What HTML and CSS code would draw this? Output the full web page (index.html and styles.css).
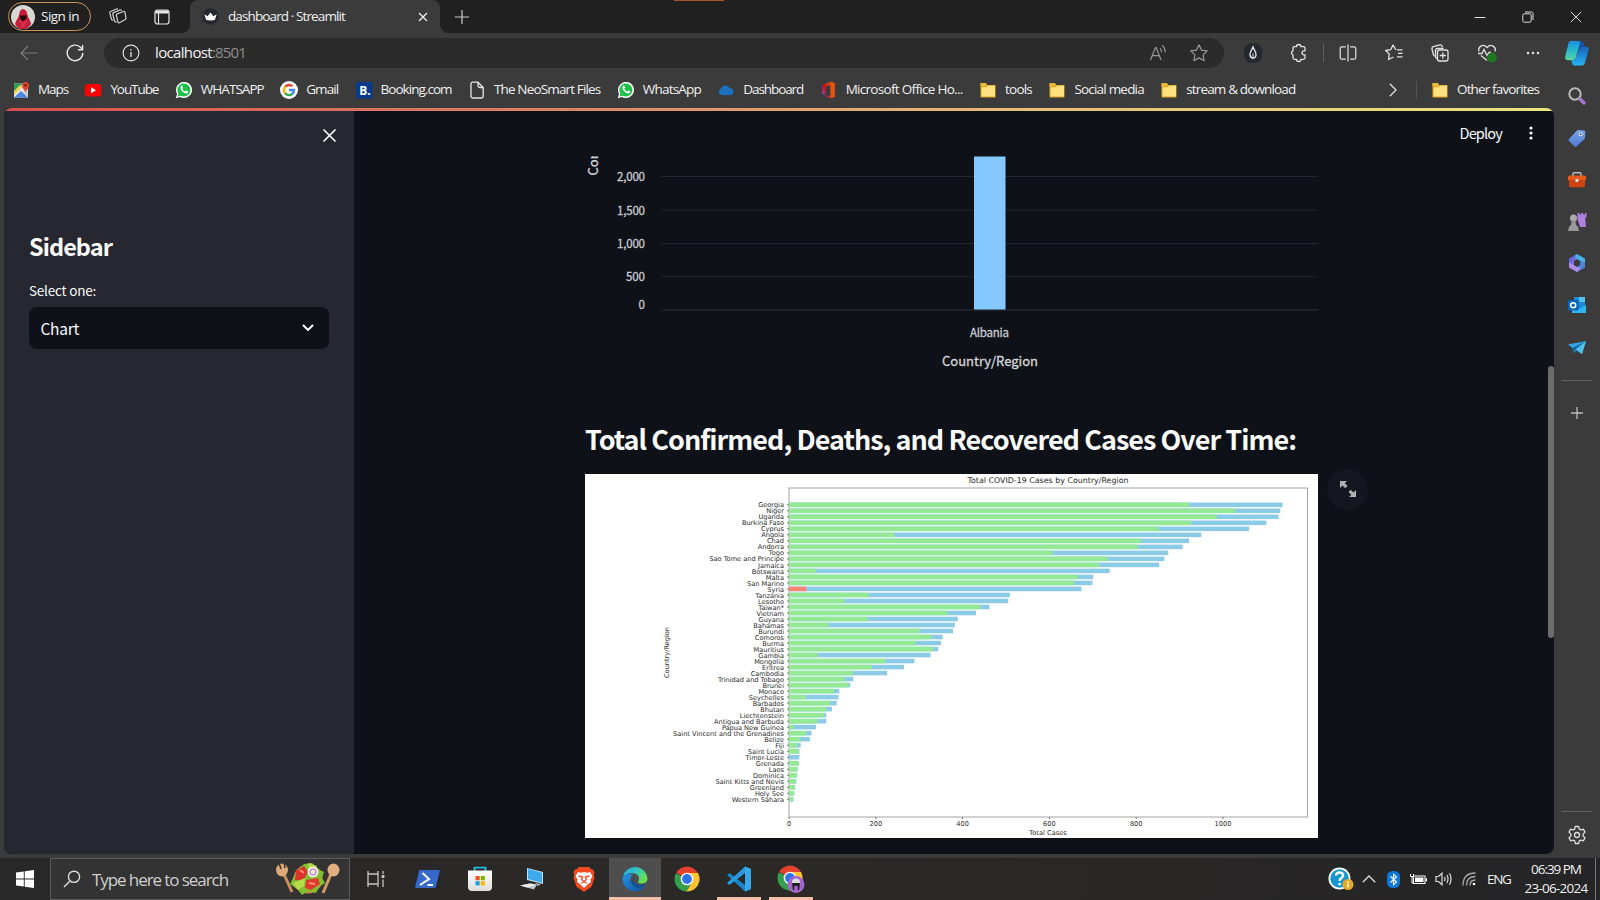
FILE: index.html
```html
<!DOCTYPE html>
<html lang="en">
<head>
<meta charset="utf-8">
<title>dashboard · Streamlit</title>
<link rel="stylesheet" href="styles.css">
</head>
<body>
<svg class="defs" width="0" height="0">
  <defs>
    <linearGradient id="gCopA" x1="0" y1="0" x2="0" y2="1"><stop offset="0" stop-color="#1b8fe0"/><stop offset=".5" stop-color="#25b9c8"/><stop offset="1" stop-color="#5fd5a0"/></linearGradient>
    <linearGradient id="gCopB" x1="0" y1="0" x2="0" y2="1"><stop offset="0" stop-color="#1660c0"/><stop offset="1" stop-color="#25b5f2"/></linearGradient>
    <linearGradient id="gEdge" x1="0" y1="0" x2="1" y2=".5"><stop offset="0" stop-color="#2aa9e8"/><stop offset=".55" stop-color="#2fc6c4"/><stop offset="1" stop-color="#68e04c"/></linearGradient>
    <linearGradient id="gEdgeB" x1="0" y1="0" x2="1" y2="1"><stop offset="0" stop-color="#2496e4"/><stop offset="1" stop-color="#1050a0"/></linearGradient>
    <linearGradient id="gTag" x1="0" y1="0" x2="0" y2="1"><stop offset="0" stop-color="#7aa5ee"/><stop offset="1" stop-color="#5078cf"/></linearGradient>
    <linearGradient id="gOff" x1="0" y1="1" x2="1" y2="0"><stop offset="0" stop-color="#b04be0"/><stop offset=".45" stop-color="#c8101e"/><stop offset="1" stop-color="#ee6a10"/></linearGradient>
    <linearGradient id="gM1" x1="0" y1="0" x2="1" y2="1"><stop offset="0" stop-color="#4a5fd8"/><stop offset="1" stop-color="#a678e8"/></linearGradient>
    <linearGradient id="gStore" x1="0" y1="0" x2="0" y2="1"><stop offset="0" stop-color="#fff"/><stop offset="1" stop-color="#dcdcdc"/></linearGradient>
  </defs>
  <symbol id="folder" viewBox="0 0 18 18"><path d="M1.500 2h5.200l1.600 2h8.200v12.500h-15z" fill="#d9a520"/><path d="M2.500 6.200h5L9 4.800h7v10.700H2.500z" fill="#ffdf7e"/><path d="M1.500 2h5.200l1.300 1.700L6.600 5.400H1.500z" fill="#edb83a"/></symbol>
  <symbol id="whatsapp" viewBox="0 0 18 18"><path d="M.8 17.300l1.300-4.300A8 8 0 1 1 5 15.900z" fill="#fff"/><path d="M2.600 15.500l.8-3A6.500 6.500 0 1 1 5.800 14.700z" fill="#1fbf4c"/><path d="M5.700 5.300c.5-1 1.400-.9 1.700-.2l.7 1.500-.8 1.200c.6 1.300 1.600 2.200 2.900 2.700l1-1.100 1.800.9c.4.300 0 1.500-.7 1.900-2.500 1.300-8-3.300-6.600-6.900z" fill="#fff"/></symbol>
  <symbol id="chrome" viewBox="0 0 26 26"><path d="M13 13L2.200 6.800A12.500 12.500 0 0 1 23.800 6.800z" fill="#e8402f"/><path d="M13 13L1.900 7.200A12.500 12.500 0 0 0 12.500 25.500L18.500 15z" fill="#34a04e"/><path d="M13 7h11a12.500 12.500 0 0 1-11.500 18.500L18.500 15z" fill="#fcc42e"/><circle cx="13" cy="13" r="6.300" fill="#fff"/><circle cx="13" cy="13" r="4.900" fill="#2f73e8"/></symbol>
</svg>

<div class="browser">
  <header class="titlebar">
    <span class="accent"></span>
    <div class="signin">
      <svg width="24" height="24" viewBox="0 0 24 24"><circle cx="12" cy="12" r="12" fill="#d8d8d2"/><path d="M4 19c1-4 3-5 4-9 .5-4 2-6 4-6s4 2 4.500 6c.5 3 3 5 3.500 9-2 4-5 5-8 5s-6-1-8-5z" fill="#c41c3a"/><path d="M8.500 10.500h7.500l-1.500 4-2.400 1.500-2.300-1.500z" fill="#1b0b10"/><path d="M8 16l3 2v4M16 16l-3 2v4" stroke="#e24a5e" fill="none"/></svg>
      <span data-w="38">Sign in</span>
    </div>
    <svg class="t-work" width="20" height="20" viewBox="0 0 20 20" fill="none" stroke="#d0d0d0" stroke-width="1.200" stroke-linejoin="round"><path d="M9 7l6.500-2.500q1.200-.4 1.500.8l1 5.700q.2 1-.7 1.500l-6 3.300q-1 .4-1.300-.6L8.400 8.300q0-.9.600-1.300z"/><path d="M5.500 5.600L12 3q1-.3 1.600.6M5.500 5.600q-.9.400-.7 1.400l1.700 7 2 1.500"/><path d="M2.500 4.500L8.500 2q.9-.3 1.500.4M2.500 4.500q-.9.400-.7 1.400l1.700 6.500 1.300 1"/></svg>
    <svg class="t-panel" width="18" height="18" viewBox="0 0 18 18" fill="none" stroke="#e6e6e6" stroke-width="1.200"><rect x="2" y="2" width="14" height="14" rx="2.500"/><path d="M2.500 4h13" stroke-width="3"/><path d="M5.500 5v11"/></svg>
    <div class="tab">
      <svg width="17" height="17" viewBox="0 0 17 17"><circle cx="8.500" cy="8.500" r="8.300" fill="#262730"/><path d="M2.300 6.200l3.300 2 2.900-3.700 2.900 3.700 3.300-2-1.900 5.800q-4.300.8-8.600 0z" fill="#fff"/></svg>
      <span class="tab-title" data-w="117">dashboard · Streamlit</span>
      <svg class="tab-x" width="10" height="10" viewBox="0 0 10 10" stroke="#eee" stroke-width="1.300"><path d="M1 1l8 8M9 1l-8 8"/></svg>
    </div>
    <svg class="t-plus" width="16" height="16" viewBox="0 0 16 16" stroke="#ccc" stroke-width="1.200"><path d="M8 1v14M1 8h14"/></svg>
    <div class="winbtns">
      <svg width="12" height="12" viewBox="0 0 12 12" stroke="#ddd"><path d="M.5 6.500h11"/></svg>
      <svg width="12" height="12" viewBox="0 0 12 12" fill="none" stroke="#ddd"><rect x=".8" y="2.800" width="8.400" height="8.400" rx="1.500"/><path d="M3 1h6.500q1.500 0 1.500 1.500V9"/></svg>
      <svg width="12" height="12" viewBox="0 0 12 12" stroke="#ddd"><path d="M.8.8l10.400 10.400M11.200.8L.8 11.200"/></svg>
    </div>
  </header>

  <div class="chrome-top">
    <div class="toolbar">
      <svg class="back" width="18" height="16" viewBox="0 0 18 16" fill="none" stroke="#7d7d7d" stroke-width="1.200"><path d="M17.500 8H1M8 1L1 8l7 7"/></svg>
      <svg class="reload" width="18" height="18" viewBox="0 0 18 18" fill="none" stroke="#e6e6e6" stroke-width="1.400"><path d="M16.800 9A7.800 7.800 0 1 1 14.700 3.600L16.500 5.500M16.600 1v4.700h-4.700"/></svg>
      <div class="address">
        <svg class="info" width="18" height="18" viewBox="0 0 18 18" fill="none" stroke="#ddd" stroke-width="1.200"><circle cx="9" cy="9" r="7.900"/><path d="M9 8v5M9 5v1.500" stroke-width="1.400"/></svg>
        <span class="host" data-w="57">localhost</span><span class="port" data-w="34">:8501</span>
        <svg class="aloud" width="18" height="18" viewBox="0 0 18 18" fill="none" stroke="#999" stroke-width="1.200"><path d="M1.500 16L6.500 3.500h.6l5 12.500M3.300 11.700h7M11 4.100q1.500 1.200 1.300 4M13.300 1.500q3 2.500 2.700 7"/></svg>
        <svg class="fav" width="20" height="20" viewBox="0 0 20 20" fill="none" stroke="#999" stroke-width="1.200" stroke-linejoin="round"><path d="M10 1.800l2.500 5.300 5.700.8-4.100 4 1 5.800-5.100-2.800-5.100 2.800 1-5.800-4.100-4 5.700-.8z"/></svg>
      </div>
      <div class="tools">
        <span><svg width="18" height="20" viewBox="0 0 18 20"><rect width="18" height="20" rx="8" fill="#24282f"/><path d="M9 4c1 3 3 4.500 3 7.500a3 3.500 0 0 1-6 0c0-3 2-4.500 3-7.500z" fill="none" stroke="#eee" stroke-width="1.300"/><path d="M9 10.500v3.500" stroke="#ddd"/></svg></span>
        <span><svg width="20" height="20" viewBox="0 0 20 20" fill="none" stroke="#e2e2e2" stroke-width="1.300" stroke-linejoin="round"><path d="M5.500 3.700h2a2.200 2.200 0 0 1 4.400 0h2.600q1.500 0 1.500 1.500v2.600h-1a2 2 0 0 0 0 4h1v3q0 1.500-1.500 1.500h-2.600a2.200 2.200 0 0 1-4.400 0h-2Q4 16.300 4 14.800v-3a2.100 2.100 0 0 1 0-4V5.200q0-1.500 1.500-1.500z"/></svg></span>
        <i></i>
        <span><svg width="18" height="18" viewBox="0 0 18 18" fill="none" stroke="#e2e2e2" stroke-width="1.200"><path d="M9 .5v17M6.800 2.800H3q-1.800 0-1.800 1.800v8.800q0 1.800 1.800 1.800h3.800M11.200 2.800H15q1.800 0 1.800 1.800v8.800q0 1.800-1.800 1.800h-3.800"/></svg></span>
        <span><svg width="18" height="18" viewBox="0 0 18 18" fill="none" stroke="#e2e2e2" stroke-width="1.300" stroke-linejoin="round"><path d="M12 5.800h5.500M13 9.300h4.500M12 12.800h5.500M11 6L8 1 5.700 5.700l-5 .8 3.600 3.600-.8 5.400L8.500 13"/></svg></span>
        <span><svg width="18" height="18" viewBox="0 0 18 18" fill="none" stroke="#e2e2e2" stroke-width="1.300" stroke-linejoin="round"><path d="M4 12.200q-1.300-.3-1.600-1.500L1 5q-.3-1.800 1.400-2.300l6.500-1.800q1.700-.3 2.300 1.300l.3 1"/><path d="M6.500 14.500H6q-1.500-.3-1.500-2V6.500Q4.500 4.500 6.500 4.500h6"/><rect x="6.500" y="6" width="10.500" height="11" rx="2"/><path d="M11.800 8.500v6M8.800 11.500h6"/></svg></span>
        <span><svg width="20" height="20" viewBox="0 0 20 20" fill="none" stroke="#e2e2e2" stroke-width="1.300"><path d="M2 8.500C.5 4 6 0 10 4.500c4-4.500 9.500-.5 8 4M1 10.500h4l2-4 3 6 2-3h2M4 12.500l6 5"/><circle cx="15" cy="14.500" r="4.800" fill="#1b7a1e" stroke="none"/></svg></span>
        <span><svg width="16" height="4" viewBox="0 0 16 4" fill="#ddd"><circle cx="3" cy="2" r="1.300"/><circle cx="8" cy="2" r="1.300"/><circle cx="13" cy="2" r="1.300"/></svg></span>
      </div>
    </div>
    <nav class="bookmarks">
      <a><svg width="18" height="18" viewBox="0 0 18 18"><path d="M2 2.500h14v14H2z" fill="#e9e9e4"/><path d="M2 2.500h9L2 12z" fill="#2f9b53"/><path d="M2 16.500l7-6.500 7 6.500z" fill="#4b87e8"/><path d="M2 10l6-6 2 2-8 8z" fill="#f4d251"/><path d="M11 11l5 5V8z" fill="#c9ccc8"/><path d="M13.500 12c0-3-3.500-4-3.500-7.500a3.500 3.500 0 0 1 7 0C17 8 13.500 9 13.500 12z" fill="#de4435"/><circle cx="13.500" cy="4.300" r="1.300" fill="#7d1d18"/></svg><span data-w="30">Maps</span></a>
      <a><svg width="18" height="18" viewBox="0 0 18 18"><rect x=".7" y="3" width="16.600" height="12.500" rx="3.500" fill="#f00"/><path d="M7 6.300l5 3-5 3z" fill="#fff"/></svg><span data-w="48">YouTube</span></a>
      <a><svg width="18" height="18"><use href="#whatsapp"/></svg><span data-w="63">WHATSAPP</span></a>
      <a><svg width="18" height="18" viewBox="0 0 18 18" fill="none" stroke-width="2.500"><circle cx="9" cy="9" r="9" fill="#fff"/><path d="M5.200 5.800a5 5 0 0 1 7.200-.7" stroke="#e84335"/><path d="M5.200 5.800a5 5 0 0 0 0 6.400" stroke="#f5b912"/><path d="M5.200 12.200a5 5 0 0 0 7 .8" stroke="#34a350"/><path d="M9 9h4.900q0 2.500-1.700 4" stroke="#4285f4"/></svg><span data-w="32">Gmail</span></a>
      <a><svg width="18" height="18" viewBox="0 0 18 18"><rect x="1" y="1" width="16.500" height="16.500" rx="1.500" fill="#0a3a8c"/><text x="4.300" y="13.800" class="bdot">B.</text></svg><span data-w="71">Booking.com</span></a>
      <a><svg width="18" height="18" viewBox="0 0 18 18" fill="none" stroke="#e8e8e8" stroke-width="1.300" stroke-linejoin="round"><path d="M3 3q0-1.800 1.800-1.800H10l5.200 5.300v8.700q0 1.800-1.800 1.800H4.800Q3 17 3 15.200zM10 1.200v3.500q0 1.800 1.800 1.800h3.400"/></svg><span data-w="106.500">The NeoSmart Files</span></a>
      <a><svg width="18" height="18"><use href="#whatsapp"/></svg><span data-w="58">WhatsApp</span></a>
      <a><svg width="18" height="18" viewBox="0 0 18 18"><path d="M4.500 14a3.300 3.300 0 0 1-.7-6.300 5 5 0 0 1 9-.8 3.600 3.600 0 0 1 .8 7.100z" fill="#1a72bf"/></svg><span data-w="60">Dashboard</span></a>
      <a><svg width="18" height="18" viewBox="0 0 18 18"><path d="M10.500.8L3.800 3.300Q2.300 4 2.300 5.500v7Q2.500 14 3.800 13.300l2-1V5.500l4.700-1.300v10.500L4 14.500l6.500 2.700 4-1.200V2z" fill="url(#gOff)"/><path d="M10.500.8l4.200 1.400v13.700l-4.200 1.300z" fill="#e2560c"/></svg><span data-w="117">Microsoft Office Ho...</span></a>
      <a><svg width="18" height="18"><use href="#folder"/></svg><span data-w="27">tools</span></a>
      <a><svg width="18" height="18"><use href="#folder"/></svg><span data-w="69.500">Social media</span></a>
      <a><svg width="18" height="18"><use href="#folder"/></svg><span data-w="109">stream &amp; download</span></a>
      <svg class="more" width="8" height="14" viewBox="0 0 8 14" fill="none" stroke="#e0e0e0" stroke-width="1.300"><path d="M.8.800L7 7 .8 13.200"/></svg>
      <i></i>
      <a><svg width="18" height="18"><use href="#folder"/></svg><span data-w="82">Other favorites</span></a>
    </nav>
  </div>

  <div class="page">
    <div class="rainbow"></div>
    <aside class="side">
      <svg class="side-x" width="13" height="13" viewBox="0 0 13 13" stroke="#fafafa" stroke-width="1.700" stroke-linecap="round"><path d="M1 1l11 11M12 1L1 12"/></svg>
      <h2><span data-w="83">Sidebar</span></h2>
      <label><span data-w="67">Select one:</span></label>
      <div class="select"><span data-w="38.500">Chart</span><svg width="12" height="8" viewBox="0 0 12 8" fill="none" stroke="#fafafa" stroke-width="2" stroke-linecap="round" stroke-linejoin="round"><path d="M1.500 1.500L6 6l4.500-4.500"/></svg></div>
    </aside>
    <main class="content">
      <div class="appbar"><span data-w="42.500">Deploy</span><svg width="4" height="14" viewBox="0 0 4 14" fill="#fafafa"><circle cx="2" cy="2" r="1.600"/><circle cx="2" cy="7" r="1.600"/><circle cx="2" cy="12" r="1.600"/></svg></div>
      <svg class="bar-chart" width="734" height="218" viewBox="0 0 734 218">
        <g stroke="#23262e" stroke-width="1"><path d="M76.500 20.500H733M76.500 54H733M76.500 87.500H733M76.500 120.800H733"/><path d="M76.500 154H733" stroke="#2b2e36"/></g>
        <rect x="389" y=".5" width="31.500" height="153" fill="#83c9ff"/>
        <g class="axis" text-anchor="end"><text x="60" y="25.200" textLength="28">2,000</text><text x="60" y="58.500" textLength="28">1,500</text><text x="60" y="91.900" textLength="28">1,000</text><text x="60" y="125.300" textLength="19">500</text><text x="60" y="152.500">0</text></g>
        <text class="axis" x="385" y="180.600" textLength="39">Albania</text>
        <text class="axis-title" x="357" y="210.300" textLength="96">Country/Region</text>
        <text class="axis-title" transform="translate(12.500 19.500) rotate(-90)" x="0" y="0">Con</text>
      </svg>
      <h2 class="headline"><span data-w="711">Total Confirmed, Deaths, and Recovered Cases Over Time:</span></h2>
      <div class="figure">
        <svg id="cases" width="733" height="364" viewBox="585 474 733 364"></svg>
        <button class="expand" aria-label="Fullscreen"><svg width="16" height="16" viewBox="0 0 16 16" fill="#aeb0b4"><path d="M0 0h7L4.800 2.300l2.700 2.700-2.200 2.200-2.800-2.700L0 7zM16 16H9l2.300-2.300L8.500 11l2.200-2.200 2.800 2.700L16 9z"/></svg></button>
      </div>
    </main>
    <div class="thumb"></div>
  </div>

  <aside class="rail">
    <svg class="copilot" width="26" height="26" viewBox="0 0 26 27"><path d="M14 1h3q2.500 0 3 2.500l1 4.500h-5l-3-4z" fill="#1e4fae"/><path d="M6.500 1H14q2.800 0 2 3l-4 14q-1 3-4 3H3.500Q0 21 .8 17L4 4Q4.500 1 6.500 1z" fill="url(#gCopA)"/><path d="M18 7h4.500q3.300 0 2.600 3l-3.700 13q-1 3.500-4 3.500H10q-1.500 0-2-2l-.8-3.500q3.500.5 4.800-3l3-8q1-3 3-3z" fill="url(#gCopB)"/></svg>
    <svg width="20" height="20" viewBox="0 0 20 20" fill="none"><circle cx="8" cy="8" r="5.700" stroke="#b9b9b9" stroke-width="2"/><path d="M13 13l4 4" stroke="#a877d6" stroke-width="3.500" stroke-linecap="round"/></svg>
    <svg width="20" height="20" viewBox="0 0 20 20"><path d="M10.500 2l6.500.5q1.300.2 1.300 1.500l-.3 6.500-8.500 8q-1 .8-2 0L2 13q-1-1 0-2z" fill="url(#gTag)"/><circle cx="13.700" cy="6.300" r="2" fill="#dfe9fb"/><circle cx="13.700" cy="6.300" r="1" fill="#456"/></svg>
    <svg width="20" height="20" viewBox="0 0 20 20"><path d="M6 6V4q0-1.200 1.200-1.200h5.600Q14 2.800 14 4v2" fill="none" stroke="#bbb" stroke-width="1.500"/><path d="M1 7q0-1.500 1.500-1.500h15Q19 5.500 19 7v3.500H1z" fill="#e85a1a"/><path d="M2 10.500h16V16q0 1.300-1.300 1.300H3.300Q2 17.300 2 16z" fill="#d1420d"/><circle cx="10" cy="10.500" r="1.700" fill="#ddd"/></svg>
    <svg width="20" height="20" viewBox="0 0 20 20"><path d="M10.500 1h2v1.500h1.700V1h2v1.500H18V1h1.500v4l-1.300 1 .8 9h-6l-2.500-8z" fill="#b07fe0"/><circle cx="6.500" cy="6" r="3.500" fill="#aaa"/><path d="M3.500 9.500h6l-1 1.200q.3 3 2.500 4.300l1 4H1l1-4q2.200-1.300 2.500-4.300z" fill="#999"/></svg>
    <svg width="20" height="20" viewBox="0 0 20 20"><path d="M10 1L2 5.500v8.500l5-2.500V8l5-3z" fill="url(#gM1)"/><path d="M10 1l8 4.500V11l-5-3-3-2-2-3z" fill="#45b4ea"/><path d="M18 9v5.500L10 19l-4-3 7-4 .5-4z" fill="#4c86dd"/><path d="M2 9.500v5L10 19l4-4-4-1-4-2.500z" fill="#b38bea"/><path d="M10 7l3 1.700v3L10 13.500l-3-1.800v-3z" fill="#3b3b3b"/></svg>
    <svg width="20" height="20" viewBox="0 0 20 20"><path d="M7 2h11v13H7z" fill="#1a8ad8"/><path d="M12 2h6v5h-6z" fill="#4fc3f2"/><path d="M5 9.500l7 4.500 7-4v7.500q0 .5-.5.500H5z" fill="#2fb4ee"/><rect x="1" y="5" width="10.500" height="10.500" rx="1.200" fill="#0a64b8"/><circle cx="6.200" cy="10.200" r="2.500" fill="none" stroke="#fff" stroke-width="1.500"/></svg>
    <svg width="20" height="20" viewBox="0 0 20 20"><path d="M1 7.500L19 4l-4 13-5.500-3.500L6.500 16l-1-5z" fill="#31a8e2"/><path d="M5.500 11L19 4 9 12.500 6.500 16z" fill="#13699e"/><path d="M9 12l10-8-4 13z" fill="#4fc0ee"/></svg>
    <i class="rule"></i>
    <svg width="14" height="14" viewBox="0 0 14 14" stroke="#bdbdbd" stroke-width="1.300"><path d="M7 1v12M1 7h12"/></svg>
    <i class="rule low"></i>
    <svg class="gear" width="20" height="20" viewBox="0 0 20 20" fill="none" stroke="#ddd" stroke-width="1.300" stroke-linejoin="round"><path d="M8.300 1.500h3.400l.6 2.600 1.500.8 2.500-.8 1.700 3-1.900 1.900v2l1.900 1.900-1.700 3-2.500-.8-1.500.8-.6 2.600H8.300l-.6-2.600-1.500-.8-2.500.8-1.700-3L3.900 11V9L2 7.100l1.700-3 2.500.8 1.500-.8z"/><circle cx="10" cy="10" r="2.500"/></svg>
  </aside>

  <footer class="taskbar">
    <svg class="start" width="18" height="18" viewBox="0 0 18 18" fill="#fff"><path d="M0 2.600L7.800 1.500v7H0zM8.700 1.300L18 0v8.500H8.700zM0 9.500h7.800v7L0 15.400zM8.700 9.500H18V18l-9.300-1.300z"/></svg>
    <div class="search">
      <svg width="18" height="18" viewBox="0 0 18 18" fill="none" stroke="#ddd" stroke-width="1.400"><circle cx="11" cy="6.800" r="5.600"/><path d="M7 11L1 17"/></svg>
      <span data-w="136">Type here to search</span>
      <svg class="salad" width="66" height="34" viewBox="0 0 66 34"><path d="M8 10l9 20" stroke="#c98f5c" stroke-width="3"/><ellipse cx="7" cy="8" rx="6" ry="6.500" fill="#dca874"/><path d="M4 1l2 6M9 0l1 6" stroke="#333" stroke-width="1.500"/><path d="M56 12l-8 19" stroke="#d19a66" stroke-width="3"/><ellipse cx="58.500" cy="8" rx="6" ry="6.500" fill="#e0ae80"/><circle cx="33" cy="17" r="14.500" fill="#cf8a3f"/><path d="M15 22l6-12 8-8 8-1 8 7 4 2-2 6 3 5-6 4-3 6-8-2-6 4-4-5z" fill="#83bd30"/><path d="M21 9l8-5 4 6-5 9-8-1z" fill="#d8322a"/><path d="M31 18l12-2 2 6-9 6-6-2z" fill="#dd3a2c"/><path d="M18 21l12-5-1 8-6 4zM33 1l9 3-4 10-4-3z" fill="#b5dd4a"/><circle cx="38" cy="10" r="5.500" fill="#f1e6ee"/><circle cx="38" cy="10" r="3" fill="none" stroke="#a576a0"/><path d="M25 8l4 3M34 21l6 1" stroke="#ff8d7a" stroke-width="2"/></svg>
    </div>
    <div class="apps">
      <span><svg width="18" height="18" viewBox="0 0 18 18" fill="none" stroke="#c4c4c4" stroke-width="1.300"><path d="M1 1v3h10V1M1 17v-3h10v3"/><path d="M1 4v10M11 4v10"/><path d="M16 1v3M16 9.500V17" /><circle cx="16" cy="6.500" r="1" fill="#fff"/></svg></span>
      <span><svg width="25" height="18" viewBox="0 0 25 18"><path d="M5 0h19q1 0 .8 1l-4 16q-.3 1-1.300 1H1Q0 18 .2 17L4 1q.2-1 1-1z" fill="#3769cc"/><path d="M7.500 3l6.500 6-9 6M12.500 15H18" stroke="#fff" stroke-width="2" fill="none"/></svg></span>
      <span><svg width="26" height="26" viewBox="0 0 26 26"><path d="M7.500 5V1.700h11V5" fill="none" stroke="#27b5e5" stroke-width="1.800"/><path d="M1 4.500h24V21q0 4-4 4H5q-4 0-4-4z" fill="url(#gStore)"/><path d="M8.500 10h4.200v4.200H8.500z" fill="#ee4f24"/><path d="M13.700 10h4.200v4.200h-4.200z" fill="#7fb400"/><path d="M8.500 15.200h4.200v4.200H8.500z" fill="#1b9fe8"/><path d="M13.700 15.200h4.200v4.200h-4.200z" fill="#fdb500"/></svg></span>
      <span><svg width="24" height="22" viewBox="0 0 24 22"><path d="M7 0l16 4v12L7 12z" fill="#bfe2f5"/><path d="M8 1l14 3.800v10L8 11z" fill="#3fa9ee"/><path d="M0 17.500l10-2 7 1-3 5z" fill="#c3cace"/><path d="M0 17.500l10-2 6 1-9 3z" fill="#eceff1"/><path d="M15 15l6 1-3 2z" fill="#aab4ba"/></svg></span>
      <span><svg width="22" height="25" viewBox="0 0 22 25"><path d="M6 0h10l2.500 2.500 2 .2 1 3-.7 2 .7 3-3 9L11 25l-7.500-5.300-3-9 .7-3-.7-2 1-3 2-.2z" fill="#f0491f"/><path d="M5 5l3 .7L11 5l3 .7L17 5l2.500 4-2 3.500.5 2.500-3.500 2.500L11 21l-3.500-3.500L4 15l.5-2.500-2-3.500z" fill="#fff"/><path d="M5.500 9l4 1-1 2.500 2.500 2 2.500-2-1-2.500 4-1M8 16l3-1 3 1" fill="none" stroke="#f0491f" stroke-width="1.300"/></svg></span>
      <span class="active"><svg width="26" height="26" viewBox="0 0 26 26"><path d="M.8 11A12.500 12.500 0 0 1 25.500 12.500c0 4-3.500 5.500-7 5-2-.3-3-1-2.500-1.700 3-4.500-.5-8.800-6-8.800-4 0-7.500 2-9.200 4z" fill="url(#gEdge)"/><path d="M.5 13C1 8.500 7 7 11 8.300 9 10 8 12.500 8.500 15c.8 4.800 6 7.700 11.500 5.700q2.500-.8 2.500 0A12.500 12.500 0 0 1 .5 13z" fill="url(#gEdgeB)"/><path d="M11.500 10.500c-2.500 4 1.500 9 8 8.500l4-1c-1.200 2.500-4 3.800-7 3.800-6 0-9.500-6.300-5-11.300z" fill="#134f94"/></svg></span>
      <span><svg width="26" height="26"><use href="#chrome"/></svg></span>
      <span class="open"><svg width="26" height="26" viewBox="0 0 26 26"><path d="M19 .5l6 2.500v20l-6 2.500L1 9l2.500-2L19 19z" fill="#1c83c9"/><path d="M19 .5L1 17l2.500 2L19 7z" fill="#2a9be0"/><path d="M19 .5l6 2.500v20l-6 2.500z" fill="#35a8ee"/></svg></span>
      <span class="open"><svg width="28" height="28" viewBox="0 0 28 28"><use href="#chrome" width="26" height="26"/><circle cx="19" cy="19.500" r="8.500" fill="#a466cc"/><path d="M15 17q0-3.500 4-3.500t4 3.500v1h-8z" fill="#ddd"/><path d="M15 18h8l-.8 7h-1.500v-4h-3.400v4h-1.500z" fill="#222"/></svg></span>
    </div>
    <div class="tray">
      <svg class="help" width="26" height="24" viewBox="0 0 26 24"><circle cx="11.500" cy="11.500" r="11" fill="#fff"/><circle cx="11.500" cy="11.500" r="9.300" fill="#1a96cf"/><path d="M8 8.500q.3-3 3.500-3t3.600 2.700q0 1.600-1.800 2.700t-1.700 3M11.600 16v2.300" fill="none" stroke="#fff" stroke-width="2.400"/><circle cx="20" cy="17.500" r="5.500" fill="#e5a823"/><path d="M20 16.500v4M20 14v1.500" stroke="#fff" stroke-width="1.500"/></svg>
      <svg class="up" width="14" height="8" viewBox="0 0 14 8" fill="none" stroke="#ddd" stroke-width="1.300"><path d="M.8 7.300L7 1l6.200 6.300"/></svg>
      <svg class="bt" width="13" height="17" viewBox="0 0 13 17"><rect width="13" height="17" rx="5.500" fill="#0a78dc"/><path d="M3.500 5.500l6 5.500-3 2.800V3.200l3 2.800-6 5.500" fill="none" stroke="#fff" stroke-width="1.100"/></svg>
      <svg class="bat" width="17" height="12" viewBox="0 0 17 12"><rect x="3.500" y="3" width="11.500" height="7.500" fill="#292828" stroke="#fff"/><path d="M5 4.500h8.500V9H5z" fill="#fff"/><path d="M16.300 5v3.500" stroke="#fff" stroke-width="1.300"/><path d="M.5 1v2.500h3V1M2 3.500V10h2" fill="none" stroke="#fff"/></svg>
      <svg class="vol" width="18" height="14" viewBox="0 0 18 14" fill="none" stroke="#ddd" stroke-width="1.200"><path d="M1 4.500h2.500L7 1.200v11.600L3.500 9.500H1zM9.500 5q1 2 0 4M12 3q2 4 0 8M14.500 1.200q3 5.800 0 11.600"/></svg>
      <svg class="wifi" width="14" height="14" viewBox="0 0 14 14" fill="none" stroke="#aaa" stroke-width="1.300"><path d="M1 13.500Q1 1 13.500 1M4.500 13.500q0-9 9-9M8 13.500Q8 8 13.500 8"/><circle cx="12" cy="12" r="1.300" fill="#fff" stroke="none"/></svg>
      <span class="lang" data-w="23.500">ENG</span>
      <div class="clock"><span data-w="50">06:39 PM</span><span data-w="63">23-06-2024</span></div>
      <i></i>
    </div>
  </footer>
</div>
<script src="app.js"></script>
</body>
</html>
```
FILE: styles.css
```css
* { box-sizing: border-box; }
body { margin: 0; background: #3b3b3b; overflow: hidden; font-family: "Open Sans", "Noto Sans", sans-serif; color: #f0f0f0; }
svg { display: block; flex: none; }
.defs { position: absolute; }
[data-w] { display: inline-block; white-space: pre; flex: none; }
.browser { width: 1600px; height: 900px; display: grid; grid-template-columns: 1554px 46px; grid-template-rows: 33px 75px 750px 42px; }

.titlebar { grid-column: 1 / 3; position: relative; display: flex; align-items: center; background: #202020; font-size: 13.5px; }
.titlebar span { margin-top: -1.500px; }
.accent { position: absolute; left: 674px; top: 0; width: 50px; height: 2px; background: #a8552c; }
.signin { width: 83px; height: 29px; margin-left: 8px; border: 1px solid #d29455; border-radius: 15px; display: flex; align-items: center; gap: 6px; padding-left: 2px; }
.t-work { margin-left: 17px; }
.t-panel { margin-left: 25px; }
.tab { align-self: stretch; width: 250px; margin-left: 19px; padding: 0 12px; display: flex; align-items: center; background: #3b3b3b; border-radius: 8px 8px 0 0; position: relative; }
.tab::before, .tab::after { content: ""; position: absolute; bottom: 0; width: 8px; height: 8px; }
.tab::before { left: -8px; background: radial-gradient(circle at 0 0, transparent 7.5px, #3b3b3b 8px); }
.tab::after { right: -8px; background: radial-gradient(circle at 100% 0, transparent 7.5px, #3b3b3b 8px); }
.tab-title { margin-left: 9px; }
.tab-x { margin-left: auto; }
.t-plus { margin-left: 14px; }
.winbtns { margin-left: auto; padding-right: 18px; display: flex; gap: 36px; }

.chrome-top { background: #3b3b3b; }
.toolbar { height: 39px; display: flex; align-items: center; }
.back { margin-left: 20px; }
.reload { margin-left: 28px; }
.address { flex: none; width: 1120px; height: 30px; margin-left: 20px; padding: 0 15px 0 18px; border-radius: 15px; background: #2b2b2b; display: flex; align-items: center; font-size: 15px; }
.address span { margin-top: -1px; }
.host { margin-left: 15px; color: #f2f2f2; }
.port { color: #8e8e8e; }
.aloud { margin-left: auto; }
.fav { margin-left: 22px; }
.tools { flex: none; display: flex; align-items: center; margin-left: 5.500px; }
.tools span { width: 46.200px; display: flex; justify-content: center; }
.tools i { width: 1px; height: 19px; margin: 0 1px; background: #5d5d5d; }
.bookmarks { height: 35px; display: flex; align-items: center; gap: 16.400px; padding: 0 15px 0 12px; font-size: 13.5px; }
.bookmarks a { display: flex; align-items: center; gap: 8px; }
.bookmarks a span { margin-top: -1px; }
.bookmarks i { width: 1px; height: 18px; background: #555; margin-right: -2px; margin-left: 2px; }
.more { margin-left: auto; }
.bdot { font: bold 12px "Open Sans", sans-serif; fill: #fff; }

.page { position: relative; width: 1550px; height: 746px; margin-left: 4px; display: grid; grid-template-columns: 350px 1fr; border-radius: 8px; overflow: hidden; background: #0e1117; font-family: "Noto Sans CJK SC", "Noto Sans CJK JP", sans-serif; color: #fafafa; }
.rainbow { position: absolute; left: 0; right: 0; top: 0; height: 3px; background: linear-gradient(90deg, #d8504f, #dd8368 35%, #e6bd78 65%, #ebe67c); }
.side { background: #262730; padding: 21px 25px; display: flex; flex-direction: column; }
.side-x { align-self: flex-end; margin-right: -7px; }
.side h2 { margin: 88px 0 0; font-size: 23.500px; line-height: 32px; font-weight: 700; height: 32px; }
.side label { margin-top: 17px; height: 22px; font-size: 13.500px; line-height: 22px; }
.select { height: 42px; margin-top: 6px; border-radius: 8px; background: #0e1117; display: flex; align-items: center; justify-content: space-between; padding: 0 15.500px 0 11.500px; font-size: 15.500px; line-height: 22px; }
.content { padding-left: 231px; }
.appbar { height: 47.500px; padding-top: 3px; display: flex; align-items: center; justify-content: flex-end; gap: 27px; padding-right: 21px; font-size: 14.500px; line-height: 20px; }
.bar-chart { overflow: hidden; }
.axis { font-size: 11.500px; fill: #c9cbd0; font-weight: 400; stroke: #c9cbd0; stroke-width: .3px; }
.axis-title { font-size: 13px; fill: #d3d5da; stroke: #d3d5da; stroke-width: .3px; }
.headline { margin: 45.500px 0 0; height: 40px; line-height: 40px; font-size: 27px; font-weight: 700; }
.figure { display: flex; gap: 9px; margin-top: 15px; }
.figure > svg { background: #fff; }
.expand { width: 41px; height: 41px; margin-top: -5.500px; padding: 0; border: 0; border-radius: 50%; background: #14171f; display: flex; align-items: center; justify-content: center; }
.thumb { position: absolute; right: 0; top: 258px; width: 6px; height: 272px; border-radius: 3px; background: #6c6c6e; }
.fig { font-family: "DejaVu Sans", sans-serif; font-size: 6.600px; fill: #2a2a2a; }
.fig-title { font-size: 7.900px; }

.rail { grid-column: 2; grid-row: 2 / 4; background: #3b3b3b; display: flex; flex-direction: column; align-items: center; gap: 21.900px; padding-top: 6.500px; }
.copilot { margin-bottom: -1.500px; }
.rule { width: 30px; height: 1px; background: #606060; margin-top: 1px; margin-bottom: 2.500px; }
.low { margin-top: auto; margin-bottom: -8.700px; }
.gear { margin-bottom: 13px; }

.taskbar { grid-column: 1 / 3; display: flex; align-items: center; background: linear-gradient(90deg, #292828, #2b2926 50%, #252426); }
.start { margin-left: 16px; }
.search { width: 300px; height: 42px; margin-left: 16px; padding: 0 8px 0 12px; border: 1px solid #5c5c5c; background: #333; display: flex; align-items: center; font-size: 17px; color: #cfcfcf; }
.search span { margin-left: 11px; }
.salad { margin-left: auto; }
.apps { display: flex; height: 42px; }
.apps span { width: 51.900px; display: flex; align-items: center; justify-content: center; position: relative; }
.apps span:first-child { width: 51px; margin-right: .9px; }
.active { background: #4e4e4e; }
.active::after, .open::after { content: ""; position: absolute; bottom: 0; left: 4px; right: 4px; height: 3px; background: #f3bfa6; }
.active::after { left: 0; right: 0; }
.tray { margin-left: auto; height: 42px; display: flex; align-items: center; padding-right: 4px; }
.up { margin-left: 8px; }
.bt { margin-left: 11px; }
.bat { margin-left: 10.500px; }
.vol { margin-left: 8px; }
.wifi { margin-left: 9px; }
.lang { margin-left: 11px; font-size: 13.500px; }
.clock { width: 64px; margin-left: 13.500px; display: flex; flex-direction: column; align-items: center; font-size: 13.500px; line-height: 19px; }
.tray i { width: 1px; height: 42px; margin-left: 7px; background: #777; }
```
FILE: app.js
```js
// Letter-space each label so that it fills its designed width.
document.querySelectorAll('[data-w]').forEach(function (el) {
  var w = parseFloat(el.dataset.w);
  var natural = el.getBoundingClientRect().width;
  el.style.letterSpacing = (w - natural) / el.textContent.length + 'px';
  el.style.width = w + 'px';
});

// [country, confirmed, recovered, deaths drawn in front]
var rows = [
  ['Georgia', 1137, 922], ['Niger', 1132, 1027], ['Uganda', 1128, 986], ['Burkina Faso', 1100, 926],
  ['Cyprus', 1060, 852], ['Angola', 950, 242], ['Chad', 922, 810], ['Andorra', 907, 803],
  ['Togo', 874, 607], ['Sao Tome and Principe', 865, 734], ['Jamaica', 853, 714], ['Botswana', 739, 63],
  ['Malta', 701, 665], ['San Marino', 699, 657], ['Syria', 674, 0, 40], ['Tanzania', 509, 183],
  ['Lesotho', 505, 128], ['Taiwan*', 462, 440], ['Vietnam', 431, 365], ['Guyana', 389, 181],
  ['Bahamas', 382, 91], ['Burundi', 378, 301], ['Comoros', 354, 328], ['Burma', 350, 292],
  ['Mauritius', 344, 332], ['Gambia', 326, 66], ['Mongolia', 289, 222], ['Eritrea', 265, 191],
  ['Cambodia', 226, 147], ['Trinidad and Tobago', 148, 128], ['Brunei', 141, 138], ['Monaco', 116, 104],
  ['Seychelles', 114, 39], ['Barbados', 110, 94], ['Bhutan', 99, 86], ['Liechtenstein', 86, 81],
  ['Antigua and Barbuda', 86, 65], ['Papua New Guinea', 62, 11], ['Saint Vincent and the Grenadines', 52, 39],
  ['Belize', 48, 26], ['Fiji', 27, 18], ['Saint Lucia', 24, 22], ['Timor-Leste', 24, 0], ['Grenada', 23, 23],
  ['Laos', 20, 19], ['Dominica', 18, 18], ['Saint Kitts and Nevis', 17, 15], ['Greenland', 14, 13],
  ['Holy See', 12, 12], ['Western Sahara', 10, 8]
];
var X0 = 789, UNIT = 0.434, Y0 = 504.8, STEP = 6.01;
var out = '<rect x="789" y="488" width="518.500" height="329" fill="none" stroke="#8c8c8c" stroke-width=".8"/>';
rows.forEach(function (r, i) {
  var y = Y0 + i * STEP;
  function bar(v, c) {
    return '<rect x="' + X0 + '" y="' + (y - 2.3) + '" width="' + v * UNIT + '" height="4.6" fill="' + c + '"/>';
  }
  out += bar(r[1], '#8ccbe6') + bar(r[2], '#94ea94');
  if (r[3]) out += bar(r[3], '#f98375');
  out += '<path d="M787 ' + y + 'h2" stroke="#444" stroke-width=".7"/>';
  out += '<text class="fig" x="784" y="' + (y + 2.6) + '" text-anchor="end">' + r[0] + '</text>';
});
for (var v = 0; v <= 1000; v += 200) {
  var x = X0 + v * UNIT;
  out += '<path d="M' + x + ' 817v2" stroke="#444" stroke-width=".7"/>';
  out += '<text class="fig" x="' + x + '" y="826.4" text-anchor="middle">' + v + '</text>';
}
out += '<text class="fig" x="1048" y="835.300" text-anchor="middle" textLength="37.500">Total Cases</text>';
out += '<text class="fig" transform="translate(668.600 652.500) rotate(-90)" text-anchor="middle" textLength="51">Country/Region</text>';
out += '<text class="fig fig-title" x="1048" y="483.300" text-anchor="middle" textLength="161">Total COVID-19 Cases by Country/Region</text>';
document.getElementById('cases').innerHTML = out;
```
